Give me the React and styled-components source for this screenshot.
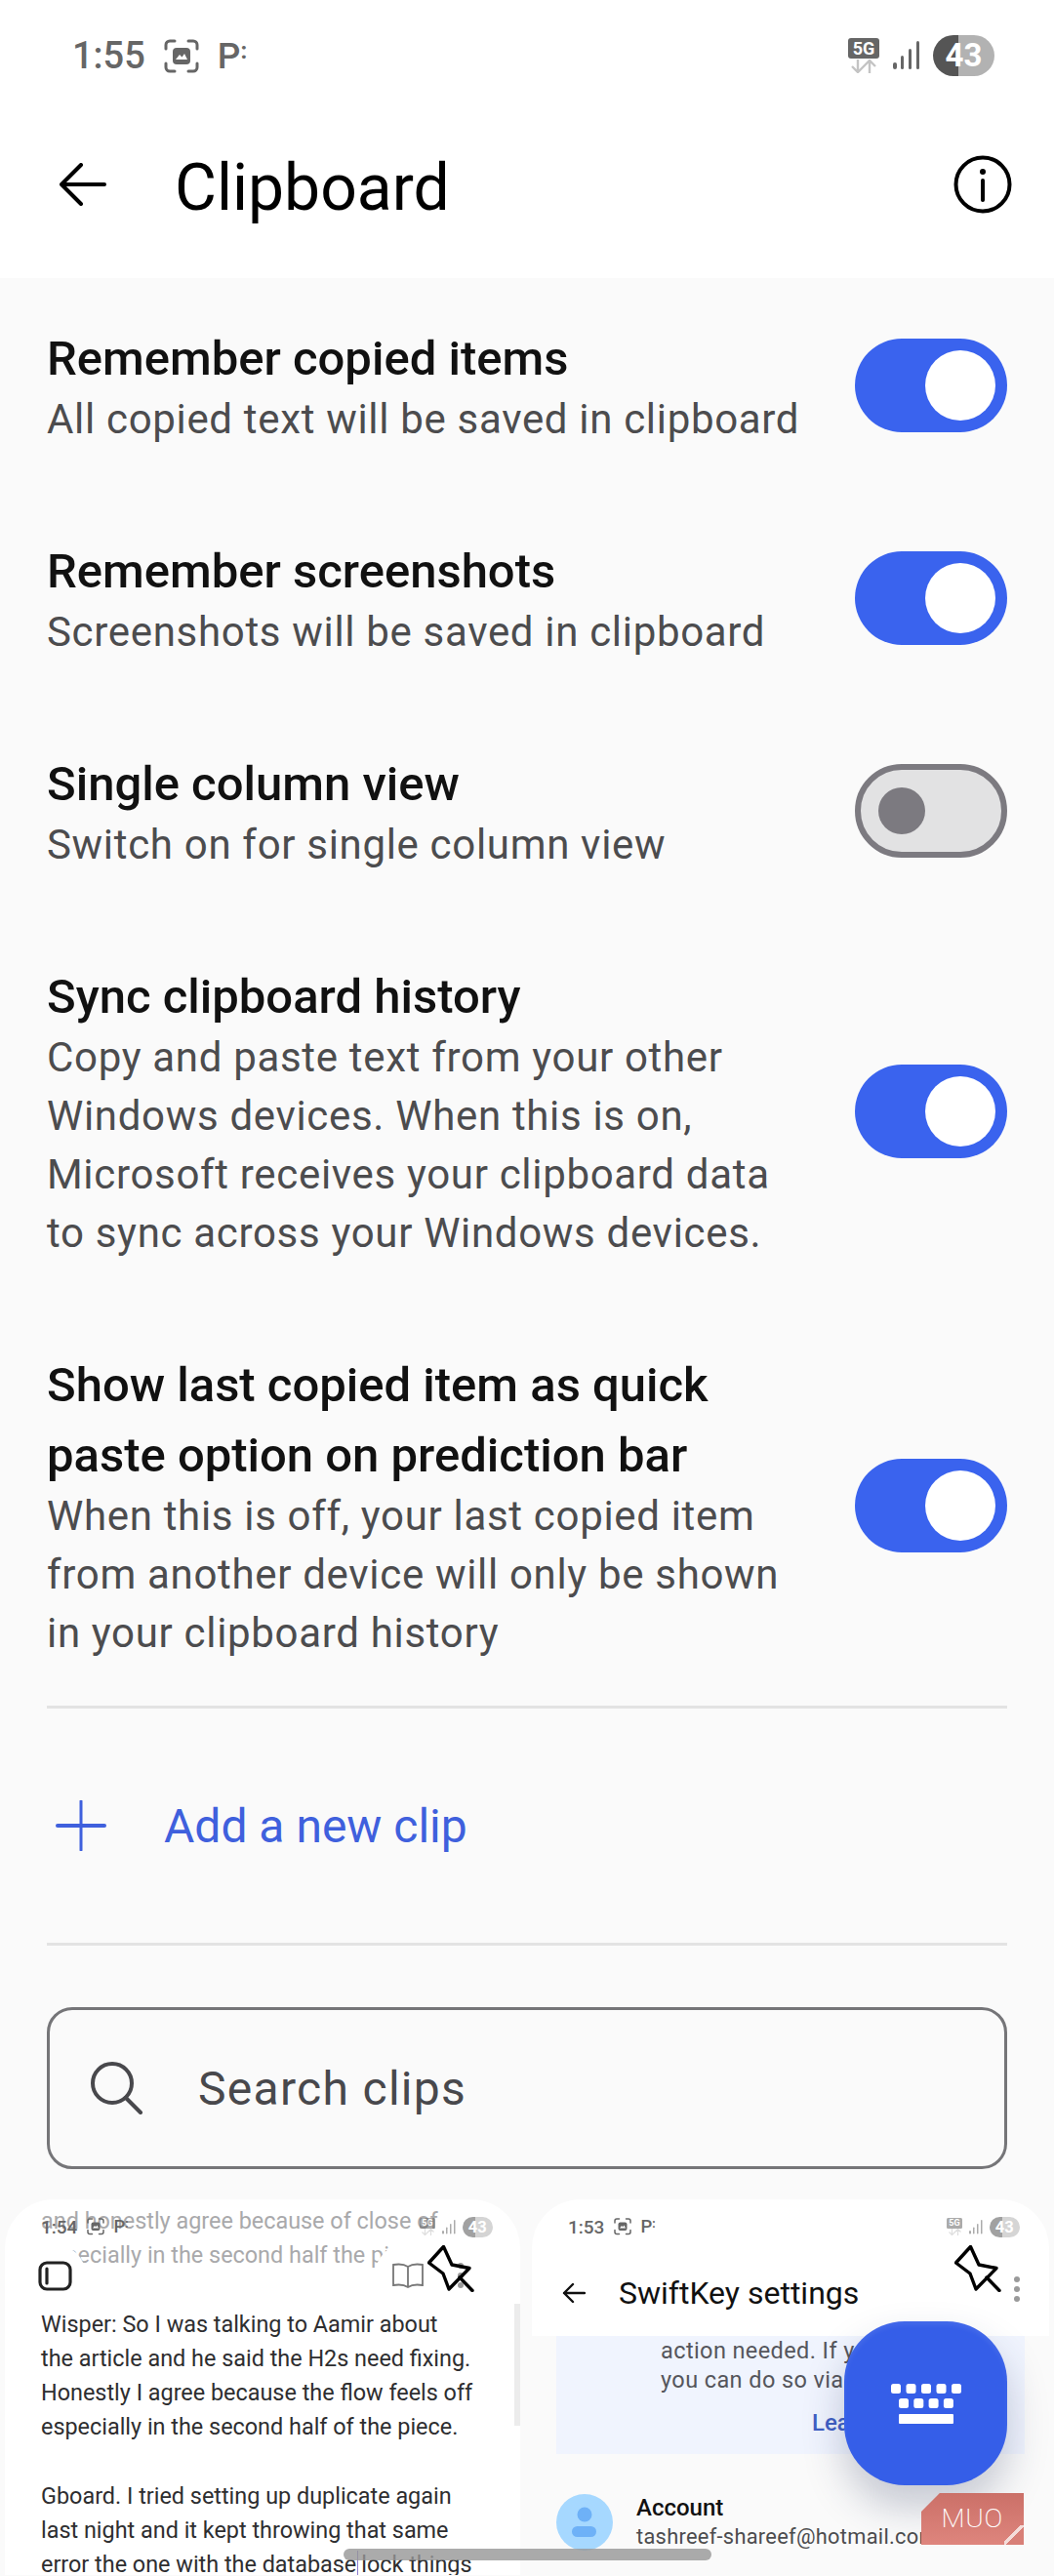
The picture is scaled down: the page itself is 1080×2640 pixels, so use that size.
import React from 'react';
import styled, { createGlobalStyle } from 'styled-components';

const GlobalStyle = createGlobalStyle`
  html, body {
    margin: 0;
    padding: 0;
    background: #fafafa;
    font-family: Roboto, "Liberation Sans", sans-serif;
  }
`;

const settings = [
  {
    title: ['Remember copied items'],
    sub: ['All copied text will be saved in clipboard'],
    on: true,
  },
  {
    title: ['Remember screenshots'],
    sub: ['Screenshots will be saved in clipboard'],
    on: true,
  },
  {
    title: ['Single column view'],
    sub: ['Switch on for single column view'],
    on: false,
  },
  {
    title: ['Sync clipboard history'],
    sub: [
      'Copy and paste text from your other',
      'Windows devices. When this is on,',
      'Microsoft receives your clipboard data',
      'to sync across your Windows devices.',
    ],
    on: true,
  },
  {
    title: ['Show last copied item as quick', 'paste option on prediction bar'],
    sub: [
      'When this is off, your last copied item',
      'from another device will only be shown',
      'in your clipboard history',
    ],
    on: true,
  },
];

const noteLines = [
  { text: 'and honestly agree because of close of', faded: true },
  { text: 'especially in the second half the piece', faded: true },
  { text: '\u00a0' },
  { text: 'Wisper: So I was talking to Aamir about' },
  { text: 'the article and he said the H2s need fixing.' },
  { text: 'Honestly I agree because the flow feels off' },
  { text: 'especially in the second half of the piece.' },
  { text: '\u00a0' },
  { text: 'Gboard. I tried setting up duplicate again' },
  { text: 'last night and it kept throwing that same' },
];

function ScreenshotIcon() {
  return (
    <svg width="36" height="35" viewBox="0 0 36 35" fill="none">
      <path
        d="M2 10V6a4 4 0 0 1 4-4h5M25 2h5a4 4 0 0 1 4 4v4M34 25v4a4 4 0 0 1-4 4h-5M11 33H6a4 4 0 0 1-4-4v-4"
        stroke="#666"
        strokeWidth="3"
        strokeLinecap="round"
      />
      <rect x="9" y="9" width="18" height="17" rx="4" fill="#666" />
      <path d="M12 21l4-5 2.5 2.5L21 15l3 6z" fill="#fff" />
    </svg>
  );
}

function SignalIcon() {
  return (
    <svg width="27" height="30" viewBox="0 0 27 30" fill="#666">
      <rect x="0" y="22" width="4" height="7" rx="2" />
      <rect x="8" y="15" width="3" height="14" rx="1.5" />
      <rect x="16" y="8" width="3" height="21" rx="1.5" />
      <rect x="24" y="0" width="3" height="29" rx="1.5" />
    </svg>
  );
}

function ArrowsIcon() {
  return (
    <svg width="30" height="14" viewBox="0 0 30 14" fill="none" stroke="#c4c4c4" strokeWidth="2.4">
      <path d="M9 0v12M3 7l6 6 6-6M21 14V2M15 7l6-6 6 6" />
    </svg>
  );
}

function StatusContent() {
  return (
    <>
      <StatusLeft>
        <Clock>1:55</Clock>
        <ScreenshotIcon />
        <NotifyLetter>
          P<NotifyDots>:</NotifyDots>
        </NotifyLetter>
      </StatusLeft>
      <StatusRight>
        <NetworkStack>
          <NetworkTag>5G</NetworkTag>
          <ArrowsIcon />
        </NetworkStack>
        <SignalIcon />
        <Battery>43</Battery>
      </StatusRight>
    </>
  );
}

function MiniStatus({ time, over }) {
  return (
    <MiniBar $over={over}>
      <StatusLeft>
        <Clock>{time}</Clock>
        <ScreenshotIcon />
        <NotifyLetter>
          P<NotifyDots>:</NotifyDots>
        </NotifyLetter>
      </StatusLeft>
      <MiniRight>
        <NetworkStack>
          <NetworkTag>5G</NetworkTag>
          <ArrowsIcon />
        </NetworkStack>
        <SignalIcon />
        <Battery>43</Battery>
      </MiniRight>
    </MiniBar>
  );
}

function PinIcon() {
  return (
    <svg width="48" height="48" viewBox="0 0 48 48" fill="none" stroke="#000" strokeWidth="3.4" strokeLinejoin="round" strokeLinecap="round">
      <path d="M1.5 18L16.5 1.5 25 20l18 3.5L22 45l-6-16z" />
      <path d="M33 33l13 13.5" />
    </svg>
  );
}

function App() {
  return (
    <Page>
      <GlobalStyle />
      <TopArea>
        <StatusBar>
          <StatusContent />
        </StatusBar>
        <Header>
          <svg width="48" height="44" viewBox="0 0 48 44" fill="none" stroke="#000" strokeWidth="4" strokeLinecap="round" strokeLinejoin="round">
            <path d="M46 22H3M22 2L2 22l20 20" />
          </svg>
          <HeaderTitle>Clipboard</HeaderTitle>
          <svg width="60" height="60" viewBox="0 0 60 60" fill="none" stroke="#000">
            <circle cx="30" cy="30" r="27.5" strokeWidth="4" />
            <path d="M30 26v20" strokeWidth="4" strokeLinecap="round" />
            <circle cx="30" cy="17" r="3" fill="#000" stroke="none" />
          </svg>
        </Header>
      </TopArea>

      <Settings>
        {settings.map((item) => (
          <Row key={item.title[0]}>
            <RowText>
              {item.title.map((line) => (
                <RowTitle key={line}>{line}</RowTitle>
              ))}
              <RowSub>
                {item.sub.map((line) => (
                  <div key={line}>{line}</div>
                ))}
              </RowSub>
            </RowText>
            <Toggle $on={item.on}>
              <Thumb $on={item.on} />
            </Toggle>
          </Row>
        ))}
      </Settings>

      <Divider />
      <AddRow>
        <svg width="52" height="52" viewBox="0 0 52 52" fill="none" stroke="#3f60dd" strokeLinecap="round">
          <path d="M2 26h48" strokeWidth="4" />
          <path d="M26 1v50" strokeWidth="3" />
        </svg>
        <AddLabel>Add a new clip</AddLabel>
      </AddRow>
      <Divider />

      <SearchBox>
        <svg width="54" height="54" viewBox="0 0 54 54" fill="none" stroke="#48484c" strokeWidth="4" strokeLinecap="round">
          <circle cx="22" cy="22" r="20" />
          <path d="M36 37l15 15" />
        </svg>
        <SearchLabel>Search clips</SearchLabel>
      </SearchBox>

      <Clips>
        <NoteCard>
          <MiniStatus time="1:54" over />
          <NoteBody>
            {noteLines.map((line, i) => (
              <NoteLine key={i} $faded={line.faded}>
                {line.text}
              </NoteLine>
            ))}
            <NoteLine>
              error the one with the database<Caret />lock things
            </NoteLine>
          </NoteBody>
          <RoundButton>
            <svg width="35" height="31" viewBox="0 0 35 31" fill="none" stroke="#222" strokeWidth="3.2">
              <rect x="2" y="2" width="31" height="27" rx="7" />
              <path d="M9 8v15" strokeLinecap="round" />
            </svg>
          </RoundButton>
          <PillButton>
            <svg width="32" height="28" viewBox="0 0 32 28" fill="none" stroke="#777" strokeWidth="1.8">
              <path d="M16 5c-3-2-9-3-15-2v21c6-1 12 0 15 2 3-2 9-3 15-2V3c-6-1-12 0-15 2zM16 5v21" />
            </svg>
            <DotsColumn $color="#999" />
          </PillButton>
          <PinSlot>
            <PinIcon />
          </PinSlot>
          <ScrollThumb />
        </NoteCard>

        <SettingsCard>
          <CardTop>
            <MiniStatus time="1:53" />
            <CardHeader>
              <svg width="24" height="22" viewBox="0 0 24 22" fill="none" stroke="#111" strokeWidth="2.4" strokeLinecap="round" strokeLinejoin="round">
                <path d="M23 11H2M11 2l-9 9 9 9" />
              </svg>
              <CardTitle>SwiftKey settings</CardTitle>
            </CardHeader>
            <DotsColumn $color="#9a9a9a" $floating />
          </CardTop>
          <NoticePanel>
            <NoticeText>action needed. If you</NoticeText>
            <NoticeText>you can do so via the</NoticeText>
            <NoticeLink>Learn</NoticeLink>
          </NoticePanel>
          <AccountRow>
            <Avatar>
              <svg width="28" height="32" viewBox="0 0 28 32" fill="#6eb1f7">
                <circle cx="14" cy="8" r="7.5" />
                <rect x="1" y="20" width="25" height="11" rx="5.5" />
              </svg>
            </Avatar>
            <div>
              <AccountName>Account</AccountName>
              <AccountMail>tashreef-shareef@hotmail.com</AccountMail>
            </div>
          </AccountRow>
          <PinSlot>
            <PinIcon />
          </PinSlot>
        </SettingsCard>
      </Clips>

      <KeyboardFab>
        <svg width="72" height="41" viewBox="0 0 72 41" fill="#fff">
          {[0, 1, 2, 3, 4].map((n) => (
            <rect key={n} x={n * 15.5} y="0" width="10" height="10" rx="2.5" />
          ))}
          {[0, 1, 2, 3].map((n) => (
            <rect key={n} x={8 + n * 15.3} y="15" width="10" height="10" rx="2.5" />
          ))}
          <rect x="8" y="31" width="56" height="10" rx="1" />
        </svg>
      </KeyboardFab>

      <Watermark>
        <WatermarkText>MUO</WatermarkText>
        <WatermarkCorner />
      </Watermark>
      <HomeBar />
    </Page>
  );
}

const Page = styled.div`
  position: relative;
  width: 1080px;
  height: 2640px;
  overflow: hidden;
  background: #fafafa;
`;

const TopArea = styled.header`
  background: #fff;
`;

const StatusBar = styled.div`
  display: flex;
  justify-content: space-between;
  align-items: center;
  height: 114px;
  padding: 0 61px 0 74px;
  box-sizing: border-box;
`;

const StatusLeft = styled.div`
  display: flex;
  align-items: center;
  gap: 19px;
`;

const StatusRight = styled.div`
  display: flex;
  align-items: center;
  gap: 14px;
`;

const Clock = styled.span`
  font-size: 38px;
  font-weight: 500;
  color: #666;
`;

const NotifyLetter = styled.span`
  font-size: 37px;
  font-weight: 500;
  color: #666;
  line-height: 1;
`;

const NotifyDots = styled.span`
  font-size: 24px;
  font-weight: 700;
  vertical-align: 10px;
`;

const NetworkStack = styled.div`
  display: flex;
  flex-direction: column;
  align-items: center;
  gap: 1px;
`;

const NetworkTag = styled.span`
  display: block;
  width: 32px;
  height: 21px;
  background: #666;
  border-radius: 3px;
  color: #fff;
  font-size: 18px;
  font-weight: 700;
  line-height: 21px;
  text-align: center;
`;

const Battery = styled.span`
  display: block;
  width: 63px;
  height: 42px;
  border-radius: 21px;
  background: linear-gradient(90deg, #555 0 41%, #b2b2b2 41% 100%);
  color: #fff;
  font-size: 33px;
  font-weight: 700;
  line-height: 42px;
  text-align: center;
`;

const Header = styled.div`
  display: flex;
  align-items: center;
  height: 171px;
  padding: 0 43px 22px 61px;
  box-sizing: border-box;

  & > svg:last-child {
    margin-left: auto;
  }
`;

const HeaderTitle = styled.h1`
  margin: 7px 0 0 70px;
  font-size: 66px;
  font-weight: 400;
  color: #000;
`;

const Settings = styled.section`
  padding: 1px 48px 0;
`;

const Row = styled.div`
  display: flex;
  align-items: center;
  justify-content: space-between;
  padding: 43px 0;
`;

const RowText = styled.div`
  width: 800px;
  padding: 3px 0 1px;
`;

const RowTitle = styled.div`
  font-size: 49px;
  font-weight: 500;
  line-height: 72px;
  color: #111;
  white-space: nowrap;
`;

const RowSub = styled.div`
  margin-top: -4px;
  font-size: 42px;
  line-height: 60px;
  letter-spacing: 0.68px;
  color: #4c4c4e;
  white-space: nowrap;
`;

const Toggle = styled.div`
  display: flex;
  align-items: center;
  justify-content: ${(p) => (p.$on ? 'flex-end' : 'flex-start')};
  width: 156px;
  height: 96px;
  box-sizing: border-box;
  border-radius: 48px;
  padding: ${(p) => (p.$on ? '0 12px' : '0 18px')};
  background: ${(p) => (p.$on ? '#3a63ee' : '#e2e2e3')};
  border: ${(p) => (p.$on ? 'none' : '6px solid #7c7a80')};
`;

const Thumb = styled.div`
  width: ${(p) => (p.$on ? '72px' : '48px')};
  height: ${(p) => (p.$on ? '72px' : '48px')};
  border-radius: 50%;
  background: ${(p) => (p.$on ? '#fff' : '#7c7a80')};
`;

const Divider = styled.hr`
  height: 3px;
  margin: 0 48px;
  border: none;
  background: #e3e3e3;
`;

const AddRow = styled.div`
  display: flex;
  align-items: center;
  gap: 59px;
  height: 240px;
  padding-left: 57px;
`;

const AddLabel = styled.span`
  font-size: 48px;
  color: #3f60dd;
`;

const SearchBox = styled.div`
  display: flex;
  align-items: center;
  gap: 56px;
  height: 166px;
  margin: 63px 48px 31px;
  padding-left: 42px;
  box-sizing: border-box;
  border: 3px solid #757578;
  border-radius: 26px;
`;

const SearchLabel = styled.span`
  font-size: 48px;
  letter-spacing: 1.3px;
  color: #48484c;
`;

const Clips = styled.section`
  display: grid;
  grid-template-columns: 528px 530px;
  gap: 12px;
  padding-left: 5px;
`;

const ClipCard = styled.article`
  position: relative;
  height: 385px;
  overflow: hidden;
  border-radius: 50px 50px 0 0;
`;

const NoteCard = styled(ClipCard)`
  background: #fff;
`;

const SettingsCard = styled(ClipCard)`
  background: #fafafa;
`;

const MiniBar = styled.div`
  zoom: 0.5;
  display: flex;
  justify-content: space-between;
  align-items: center;
  height: 112px;
  padding: 0 56px 0 74px;
  box-sizing: border-box;
  width: 1056px;
  ${(p) => p.$over && 'position: absolute; left: 0; top: 0; z-index: 2;'}
`;

const MiniRight = styled(StatusRight)`
  opacity: 0.55;
`;

const NoteBody = styled.div`
  padding: 5px 0 0 37px;
  font-size: 23.4px;
  line-height: 35.2px;
  color: #2e2e30;
  white-space: nowrap;
`;

const NoteLine = styled.div`
  color: ${(p) => (p.$faded ? '#a9a9ab' : 'inherit')};
`;

const Caret = styled.span`
  display: inline-block;
  width: 1px;
  height: 30px;
  margin: 0 3px 0 1px;
  vertical-align: -8px;
  background: #8d7bd0;
`;

const RoundButton = styled.div`
  position: absolute;
  left: 19px;
  top: 46px;
  display: flex;
  align-items: center;
  justify-content: center;
  width: 64px;
  height: 64px;
  border-radius: 50%;
  background: #fff;
`;

const PillButton = styled.div`
  position: absolute;
  left: 379px;
  top: 45px;
  display: flex;
  align-items: center;
  gap: 35px;
  width: 136px;
  height: 66px;
  padding-left: 18px;
  box-sizing: border-box;
  border-radius: 33px;
  background: #fff;
`;

const PinSlot = styled.div`
  position: absolute;
  left: 433px;
  top: 47px;
  display: flex;
  z-index: 3;
`;

const ScrollThumb = styled.div`
  position: absolute;
  right: 0;
  top: 107px;
  width: 6px;
  height: 125px;
  background: #ececec;
`;

const DotsColumn = styled.span`
  display: block;
  width: 6px;
  height: 6px;
  border-radius: 50%;
  background: ${(p) => p.$color};
  box-shadow: 0 -10px 0 ${(p) => p.$color}, 0 10px 0 ${(p) => p.$color};
  ${(p) => p.$floating && 'position: absolute; left: 494px; top: 89px;'}
`;

const CardTop = styled.div`
  position: relative;
  height: 140px;
  background: #fff;
`;

const CardHeader = styled.div`
  display: flex;
  align-items: center;
  gap: 34px;
  padding: 21px 0 0 31px;
`;

const CardTitle = styled.span`
  font-size: 32px;
  color: #111;
`;

const NoticePanel = styled.div`
  height: 121px;
  margin: 0 25px;
  padding-left: 107px;
  box-sizing: border-box;
  background: #f0f4fe;
`;

const NoticeText = styled.div`
  font-size: 23.5px;
  line-height: 30px;
  letter-spacing: 0.4px;
  color: #55565c;
  white-space: nowrap;
`;

const NoticeLink = styled.div`
  margin: 15px 0 0 155px;
  font-size: 24px;
  font-weight: 500;
  color: #3f5fc4;
`;

const AccountRow = styled.div`
  display: flex;
  align-items: center;
  gap: 24px;
  padding: 40px 0 0 25px;
`;

const Avatar = styled.div`
  display: flex;
  align-items: center;
  justify-content: center;
  width: 58px;
  height: 58px;
  border-radius: 50%;
  background: #a6d8ff;
`;

const AccountName = styled.div`
  font-size: 24px;
  font-weight: 500;
  line-height: 30px;
  color: #111;
`;

const AccountMail = styled.div`
  font-size: 21.8px;
  line-height: 30px;
  letter-spacing: 0.3px;
  color: #4c4c4e;
  white-space: nowrap;
`;

const KeyboardFab = styled.div`
  position: absolute;
  left: 865px;
  top: 2379px;
  display: flex;
  align-items: center;
  justify-content: center;
  width: 167px;
  height: 168px;
  border-radius: 62px;
  background: #355ee8;
  box-shadow: 0 22px 40px rgba(40, 50, 90, 0.25), inset 0 4px 5px rgba(255, 255, 255, 0.07);
`;

const Watermark = styled.div`
  position: absolute;
  left: 944px;
  top: 2555px;
  display: flex;
  align-items: center;
  justify-content: center;
  width: 105px;
  height: 53px;
  background: linear-gradient(180deg, #cb7068, #de857d);
  clip-path: polygon(18% 0, 100% 0, 100% 100%, 0 100%, 0 36%);
`;

const WatermarkText = styled.span`
  font-size: 25px;
  font-weight: 200;
  letter-spacing: 0.5px;
  color: #fff;
  transform: scaleX(1.12);
`;

const WatermarkCorner = styled.span`
  position: absolute;
  right: 0;
  bottom: 0;
  width: 20px;
  height: 20px;
  background: linear-gradient(135deg, transparent 0 42%, #f4dcd9 42% 54%, #d87f77 54% 100%);
`;

const HomeBar = styled.div`
  position: absolute;
  left: 352px;
  top: 2612px;
  width: 377px;
  height: 12px;
  border-radius: 6px;
  background: rgba(150, 150, 150, 0.8);
`;

export default App;
